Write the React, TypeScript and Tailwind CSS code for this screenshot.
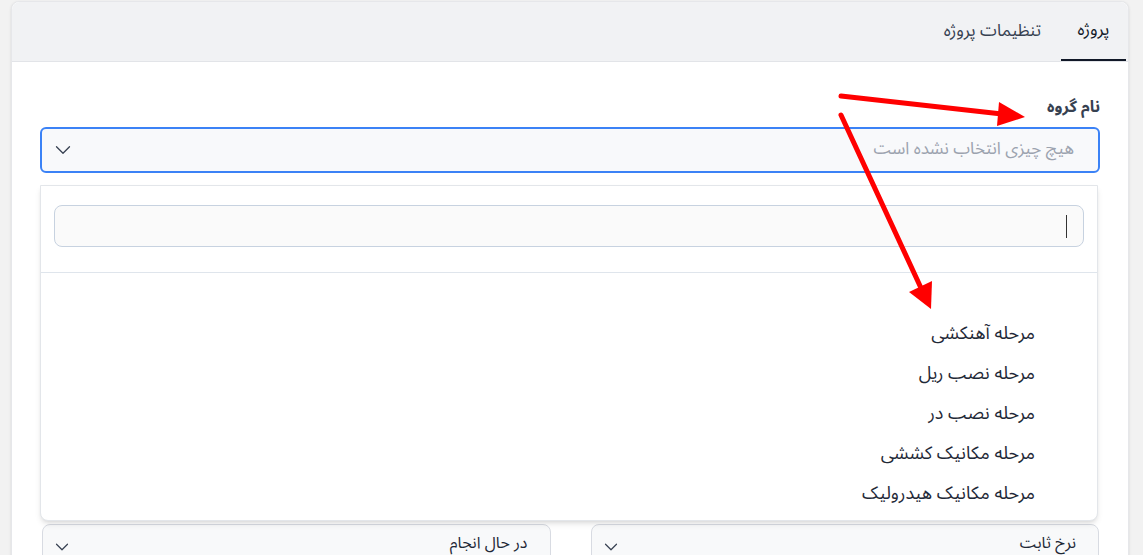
import { ChevronDown } from "lucide-react";

const stages = [
  "مرحله آهنکشی",
  "مرحله نصب ریل",
  "مرحله نصب در",
  "مرحله مکانیک کششی",
  "مرحله مکانیک هیدرولیک",
];

const font = {
  fontFamily: '"Noto Sans Arabic", "DejaVu Sans", "Noto Sans", sans-serif',
};

const Arrows = () => (
  <svg
    className="pointer-events-none absolute inset-0 z-20"
    width="1143"
    height="555"
    viewBox="0 0 1143 555"
  >
    <line x1="841" y1="96" x2="1002" y2="114" stroke="#ff0000" strokeWidth="5" strokeLinecap="round" />
    <polygon points="1025,117 999,102 997,126" fill="#ff0000" />
    <line x1="841" y1="115" x2="921" y2="288" stroke="#ff0000" strokeWidth="5" strokeLinecap="round" />
    <polygon points="931,309 909,292 932,281" fill="#ff0000" />
  </svg>
);

const SmallSelect = ({ value }: { value: string }) => (
  <div className="flex h-[46px] items-start justify-between rounded-lg border border-[#d8dbe2] bg-[#f8f9fa] pr-[22px] pl-[8px]">
    <span className="pt-[9px] text-[16px] leading-[18px] text-[#1f2937]">{value}</span>
    <ChevronDown size={22} strokeWidth={1.3} className="mt-[11px] text-[#374151]" />
  </div>
);

export default function App() {
  return (
    <div
      dir="rtl"
      style={font}
      className="relative h-[555px] w-full overflow-hidden bg-[#f2f2f2] pt-[1px] pr-[14px] pl-[11px]"
    >
      <div className="h-[600px] rounded-lg border border-[#e6e7ea] bg-white shadow-sm">
        <div className="flex h-[60px] items-end rounded-t-lg border-b border-[#e2e4e8] bg-[#f1f2f4] pr-[2px]">
          <div className="flex h-full w-[65px] items-center justify-center border-b-2 border-[#111827] pt-[1px] text-[17px] text-[#111827]">
            پروژه
          </div>
          <div className="flex h-full items-center px-[20px] text-[17px] text-[#374151]">
            تنظیمات پروژه
          </div>
        </div>

        <div className="px-[28px] pt-[35px]">
          <div className="mb-[10px] text-[16px] leading-5 font-bold text-[#374151]">
            نام گروه
          </div>
          <div className="relative">
            <div className="flex h-[46px] items-center justify-between rounded-md border-2 border-[#3b82f6] bg-[#f8f9fb] pr-[24px] pl-[8px]">
              <span className="text-[17px] text-[#9ca3af]">
                هیچ چیزی انتخاب نشده است
              </span>
              <ChevronDown size={26} strokeWidth={1.2} className="text-[#374151]" />
            </div>

            <div className="absolute top-[58px] right-[2px] left-0 z-10 rounded-b-lg border border-[#e3e6ea] bg-white shadow-md">
              <div className="border-b border-[#dfe5ec] px-[13px] pt-[19px] pb-[25px]">
                <div className="relative flex h-[42px] items-center rounded-lg border border-[#c7d2e0] bg-[#fafafa] pr-[16px]">
                  <div className="h-[23px] w-[1px] bg-[#333]" />
                </div>
              </div>
              <div className="pt-[40px] pb-[7px] pr-[62px]">
                {stages.map((s) => (
                  <div key={s} className="flex h-10 items-center text-[18px] text-[#1f2937]">
                    {s}
                  </div>
                ))}
              </div>
            </div>
          </div>

          <div className="mt-[351px] grid grid-cols-2 gap-[40px] pr-[1px] pl-[2px]">
            <SmallSelect value="نرخ ثابت" />
            <SmallSelect value="در حال انجام" />
          </div>
        </div>
      </div>
      <Arrows />
    </div>
  );
}
